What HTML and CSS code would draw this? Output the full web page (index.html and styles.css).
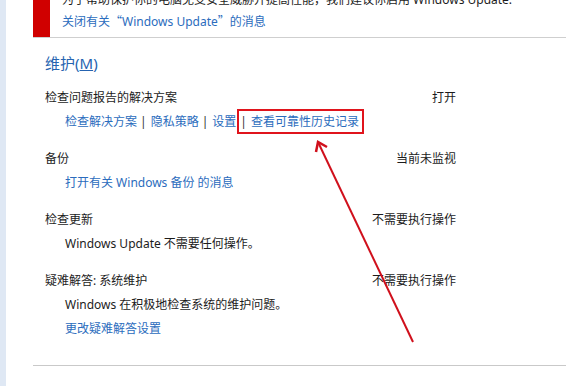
FILE: index.html
```html
<!DOCTYPE html>
<html lang="zh-CN">
<head>
    <meta charset="UTF-8">
    <title>安全性与维护</title>
    <link rel="stylesheet" href="styles.css">
</head>
<body>
    <div class="page">
        <div class="strip"></div>
        <div class="main">
            <div class="notice">
                <div class="notice-bar"></div>
                <div class="notice-text">
                    <p>为了帮助保护你的电脑免受安全威胁并提高性能，我们建议你启用 Windows Update.</p>
                    <a href="#">关闭有关<span class="cjk">“</span>Windows Update<span class="cjk">”</span>的消息</a>
                </div>
            </div>

            <div class="section">
                <h2>维护(<u>M</u>)</h2>
                <div class="items">
                    <div class="item">
                        <div class="item-head">
                            <span>检查问题报告的解决方案</span>
                            <span>打开</span>
                        </div>
                        <div class="item-body">
                            <a href="#">检查解决方案</a><span class="sep">|</span><a href="#">隐私策略</a><span class="sep">|</span><a href="#">设置</a><span class="mark"><span class="sep">|</span><a href="#">查看可靠性历史记录</a></span>
                        </div>
                    </div>

                    <div class="item">
                        <div class="item-head">
                            <span>备份</span>
                            <span>当前未监视</span>
                        </div>
                        <div class="item-body">
                            <a href="#">打开有关 Windows 备份 的消息</a>
                        </div>
                    </div>

                    <div class="item">
                        <div class="item-head">
                            <span>检查更新</span>
                            <span>不需要执行操作</span>
                        </div>
                        <div class="item-body">Windows Update 不需要任何操作。</div>
                    </div>

                    <div class="item">
                        <div class="item-head">
                            <span>疑难解答: 系统维护</span>
                            <span>不需要执行操作</span>
                        </div>
                        <div class="item-body">Windows 在积极地检查系统的维护问题。</div>
                        <div class="item-body">
                            <a href="#">更改疑难解答设置</a>
                        </div>
                    </div>
                </div>
            </div>
        </div>
    </div>

    <!-- annotation arrow -->
    <svg class="arrow" width="566" height="386" viewBox="0 0 566 386">
        <line x1="413" y1="342" x2="318" y2="142" stroke="#d0101c" stroke-width="2"/>
        <polyline points="316,152 318,142 327,147" fill="none" stroke="#d0101c" stroke-width="2.5"/>
    </svg>
</body>
</html>
```

FILE: styles.css
```css
body {
    margin: 0;
    font-family: "Noto Sans", "Noto Sans CJK SC", sans-serif;
    font-size: 12px;
    color: #1c1c1c;
    background: #fff;
    overflow: hidden;
}
a {
    color: #2b6cbd;
    text-decoration: none;
}
.cjk {
    font-family: "Noto Sans CJK SC", sans-serif;
}
.page {
    display: flex;
    min-height: 386px;
}
.strip {
    width: 6px;
    flex: none;
    background: #dfe8f4;
}
.main {
    flex: 1;
    padding-left: 27px;
}
.notice {
    display: flex;
    margin-top: -11px;
    border-bottom: 1px solid #cfcfcf;
}
.notice-bar {
    width: 17px;
    flex: none;
    background: #d00000;
}
.notice-text {
    padding: 0 0 5px 12px;
    line-height: 21px;
}
.notice-text p {
    margin: 0;
}
.section {
    padding: 15px 0 24px 12px;
    border-bottom: 1px solid #c9c9c9;
}
.section h2 {
    margin: 0 0 13px;
    font-size: 15px;
    font-weight: normal;
    line-height: 20px;
    color: #2563b0;
}
.items {
    margin-right: 110px;
}
.item {
    line-height: 24px;
    margin-bottom: 13px;
}
.item:last-child {
    margin-bottom: 0;
}
.item-head {
    display: flex;
    justify-content: space-between;
}
.item-body {
    padding-left: 20px;
}
.sep {
    margin: 0 4px 0 3px;
    color: #333;
}
.mark {
    margin-left: 1px;
    padding: 2px 3px 2px 1px;
    border: 2px solid #e0141c;
}
.mark .sep {
    margin-left: 0;
}
.arrow {
    position: absolute;
    left: 0;
    top: 0;
    pointer-events: none;
}
```
